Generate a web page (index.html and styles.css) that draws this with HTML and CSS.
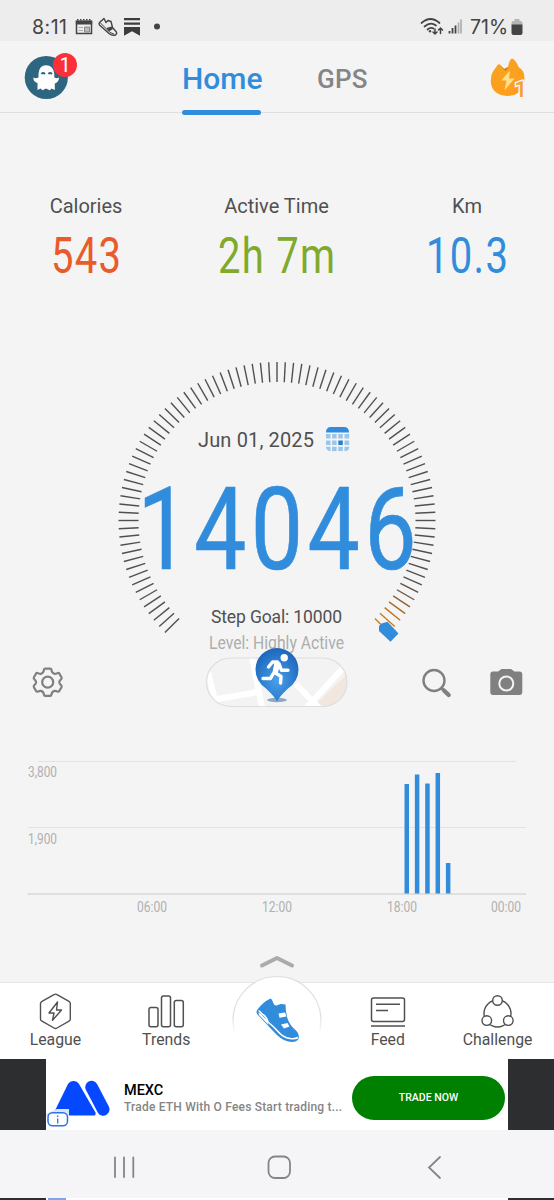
FILE: index.html
```html
<!DOCTYPE html>
<html lang="en">
<head>
<meta charset="UTF-8">
<meta name="viewport" content="width=device-width, initial-scale=1.0">
<title>Step Counter</title>
<link rel="stylesheet" href="styles.css">
</head>
<body>
<div class="status-bar">
    <span class="clock">8:11</span>
    <svg class="status-icons" width="90" height="24" viewBox="74 15 90 24">
        <path d="M76.500 21.500h15v12h-15z" fill="none" stroke="#444" stroke-width="1.500"/>
        <path d="M75.800 20.500h16.400v4h-16.400z" fill="#444"/>
        <path d="M77 19.700h14.500" stroke="#444" stroke-width="1.500" stroke-dasharray="1.500 1.500"/>
        <path d="M78.500 27.500h4.500M78.500 30.500h4.500" stroke="#aaa" stroke-width="1"/>
        <path d="M84.500 27h5v5h-5z" fill="#bbb" stroke="#777" stroke-width=".8"/>
        <path d="M104 18.500L99.500 22.500Q98.500 23.500 99.500 25L109 33.500Q112 36 115.500 35Q117.500 33.500 116 31.500L112.500 27.500L111 21.500L108 20.500L106 22.500Z" fill="none" stroke="#444" stroke-width="1.400" stroke-linejoin="round"/>
        <path d="M100 22.500L110 32.500L114 34" stroke="#444" stroke-width="1" fill="none"/>
        <path d="M106.500 28L111.500 26.500L113 29L109 31.500Z" fill="#444"/>
        <path d="M124 18h16v2.200h-16zM124 22.500h16v2.200h-16zM124 27h16v8.800l-8-4.500l-8 4.500z" fill="#3c3c3c"/>
        <circle cx="157" cy="26.500" r="3" fill="#444"/>
    </svg>
    <svg class="signal" width="43" height="24" viewBox="419 15 43 24">
        <g fill="none" stroke="#444" stroke-width="1.700" stroke-linecap="round">
            <path d="M421.500 23Q430.500 15 439.500 23M424.500 26.500Q430.500 21.500 436 25.500M427.500 29.500Q430.500 27 433.500 28.500"/>
            <path d="M435 29v5M433 32l2 2l2-2M440.500 33.500v-5.500M438.500 30l2-2l2 2" stroke-width="1.500"/>
        </g>
        <circle cx="430" cy="31.300" r="1.200" fill="#444"/>
        <path d="M449.500 33.500v-2.500M452.500 33.500v-5.500M455.500 33.500v-8" stroke="#444" stroke-width="1.800"/>
        <path d="M458.500 33.500v-11M461 33.500v-14" stroke="#aaa" stroke-width="1.600"/>
    </svg>
    <span class="percent">71%</span>
    <svg class="battery" width="12" height="18" viewBox="0 0 12 18">
        <path d="M3.500 1h5v2h1q2 0 2 2v2h-11v-2q0-2 2-2h1z" fill="#b5b5b5"/>
        <path d="M.5 6.500h11v8.500q0 2-2 2h-7q-2 0-2-2z" fill="#444"/>
    </svg>
</div>

<div class="header">
    <div class="avatar">
        <svg width="44" height="44" viewBox="24 55 44 44">
            <circle cx="46.300" cy="77.500" r="21.600" fill="#2e6681"/>
            <path d="M37.500 90V83Q33.500 82 33.300 77.500Q35.500 78.800 38.500 77.500V74Q39 65.300 46 65.300Q53.500 65.300 54.300 74V77.500Q57.500 79 59.200 77.200Q58.500 82.500 54.800 83.500V90L51.500 88.500L49.800 90.200L46 88.500L42.500 90.200L40.500 88.500Z" fill="#fff"/>
            <path d="M41.500 74q1.500-2 3.500 0M48.500 74q1.500-2 3.500 0" stroke="#2e6681" stroke-width="2" fill="none"/>
        </svg>
        <span class="badge">1</span>
    </div>
    <div class="tab active">Home</div>
    <div class="tab gps">GPS</div>
    <svg class="streak" width="38" height="42" viewBox="489 57 38 42">
        <defs>
            <linearGradient id="flame" x1="0" y1="0" x2="0" y2="1">
                <stop offset="0" stop-color="#f7a21e"/>
                <stop offset="1" stop-color="#ff9f1c"/>
            </linearGradient>
        </defs>
        <path d="M499 64Q501 65 504 69L508 67Q509 60 512 58.500Q516 60 518.500 67Q524.500 70 524.500 79Q523 96 507 96Q492 95 490.800 82Q490.500 73 496 67.500Q497 64.500 499 64Z" fill="url(#flame)"/>
        <path d="M500 65.500L504.500 69L509 66.500L505.500 71Z" fill="#cf7820"/>
        <path d="M510 70.500L501 80.500H506.500L504.500 90.500L514.500 78.500H509Z" fill="#ffe08a"/>
        <text x="514.500" y="97" class="streak-count">1</text>
    </svg>
</div>

<div class="stats">
    <div class="stat calories">
        <div class="label">Calories</div>
        <div class="value">543</div>
    </div>
    <div class="stat time">
        <div class="label">Active Time</div>
        <div class="value">2h 7m</div>
    </div>
    <div class="stat distance">
        <div class="label">Km</div>
        <div class="value">10.3</div>
    </div>
</div>

<svg class="gauge" width="554" height="315" viewBox="0 340 554 315">
    <g id="ticks"></g>
    <path d="M379 626L381.500 623.500L387.500 621.800L398.500 633.500L390.500 641.800L379 631Z" fill="#318ddc"/>
    <text x="198" y="447" class="date" textLength="116">Jun 01, 2025</text>
    <g>
        <path d="M326 432.500Q326 427 331 427H344Q349 427 349 432.500Z" fill="#318ddc"/>
        <clipPath id="calClip"><rect x="326" y="427" width="23.500" height="24.500" rx="5"/></clipPath>
        <path clip-path="url(#calClip)" d="M326 434h4.500v4.500h-4.500zM332.100 434h4.500v4.500h-4.500zM338.300 434h4.500v4.500h-4.500zM344.500 434h4.800v4.500h-4.800zM326 440.500h4.500v4.500h-4.500zM332.100 440.500h4.500v4.500h-4.500zM344.500 440.500h4.800v4.500h-4.800zM326 446.800h4.500v4.500h-4.500zM332.100 446.800h4.500v4.500h-4.500zM338.300 446.800h4.500v4.500h-4.500zM344.500 446.800h4.800v4.500h-4.800z" fill="#9cc5ea"/>
        <path d="M338.300 440.500h4.500v4.500h-4.500z" fill="#2b7fc9"/>
    </g>
    <text transform="translate(137.300 569.300) scale(.81 1)" class="steps">14046</text>
    <text x="211" y="622.500" class="goal" textLength="131">Step Goal: 10000</text>
    <text x="209" y="648.500" class="level" textLength="135" lengthAdjust="spacingAndGlyphs">Level: Highly Active</text>
</svg>

<div class="actions">
    <svg class="gear" width="30" height="30" viewBox="33 667 30 30" fill="none" stroke="#808080" stroke-width="2.200" stroke-linejoin="round">
        <path d="M45.200 668.700H50.200Q51.300 668.700 51.500 670Q51.800 673 54.300 673.800Q55.500 674 57.300 673.200Q58.700 672.600 59.400 673.700L61.500 677.300Q62.100 678.500 61 679.400Q59.300 680.700 59.300 682.300Q59.300 683.900 61 685.200Q62.100 686.100 61.500 687.300L59.400 690.900Q58.700 692 57.300 691.400Q55.500 690.600 54.300 690.900Q51.800 691.800 51.500 694.500Q51.300 695.800 50.200 695.800H45.200Q44.100 695.800 43.900 694.500Q43.600 691.800 41.100 690.900Q39.900 690.600 38.100 691.400Q36.700 692 36 690.900L33.900 687.300Q33.300 686.100 34.400 685.200Q36.100 683.900 36.100 682.300Q36.100 680.700 34.400 679.400Q33.300 678.500 33.900 677.300L36 673.700Q36.700 672.600 38.100 673.200Q39.900 674 41.100 673.800Q43.600 673 43.900 670Q44.100 668.700 45.200 668.700Z"/>
        <circle cx="47.700" cy="682.200" r="5.500"/>
    </svg>
    <svg class="map" width="142" height="62" viewBox="206 647 142 62">
        <defs>
            <radialGradient id="pin" cx=".5" cy=".6" r=".6">
                <stop offset="0" stop-color="#4aa0ea"/>
                <stop offset="1" stop-color="#1d67bd"/>
            </radialGradient>
            <clipPath id="mapClip"><rect x="206.500" y="658" width="140.500" height="48.500" rx="24.200"/></clipPath>
        </defs>
        <g clip-path="url(#mapClip)">
            <rect x="206" y="657" width="142" height="50" fill="#f3f3f3"/>
            <path d="M347 674L318 702L323 707H348Z" fill="#f1e7df"/>
            <path d="M206 701L258 692M208 672L216 705M252 657L262 707M296 684L319 708M345 666L307 707" stroke="#fff" stroke-width="6" fill="none"/>
        </g>
        <rect x="206.500" y="658" width="140.500" height="48.500" rx="24.200" fill="none" stroke="#dedede" stroke-width="1.200"/>
        <ellipse cx="277" cy="700" rx="10" ry="2.200" fill="#8ca8c8"/>
        <path d="M277 701.500Q275 697 266 688.500Q255.500 681 255.500 669.500A21.500 21.500 0 0 1 298.500 669.500Q298.500 681 288 688.500Q279 697 277 701.500Z" fill="url(#pin)"/>
        <circle cx="284.200" cy="657.800" r="3.700" fill="#fff"/>
        <path d="M268.500 667L272.500 662H277.500L279.500 664.500M279 664L281.500 670.300H288M275.500 673L281 676.500L280.500 683M273 674L270.500 678.500H263" fill="none" stroke="#fff" stroke-width="3.400" stroke-linejoin="round" stroke-linecap="round"/>
        <path d="M274.500 661.500L280.500 663.500L277.500 674L272 675Z" fill="#fff"/>
    </svg>
    <svg class="search" width="30" height="30" viewBox="421 668 30 30" fill="none" stroke="#808080">
        <circle cx="434" cy="680.500" r="10.500" stroke-width="2.400"/>
        <path d="M441.500 688.200L444 690.500" stroke-width="3"/>
        <path d="M444 690.500L448.700 695" stroke-width="4.300" stroke-linecap="round"/>
    </svg>
    <svg class="camera" width="34" height="30" viewBox="489 667 34 30">
        <path d="M493 671.500H498L501.500 669H511L514.500 671.500H519.500Q522.300 671.500 522.300 674.500V692Q522.300 695 519.500 695H493Q490.300 695 490.300 692V674.500Q490.300 671.500 493 671.500Z" fill="#808080"/>
        <circle cx="506.300" cy="683.500" r="7" fill="none" stroke="#f4f4f4" stroke-width="2"/>
    </svg>
</div>

<svg class="chart" width="554" height="265" viewBox="0 718 554 265">
    <path d="M38 761.500H516M28 827.500H526" stroke="#e3e3e3" stroke-width="1.200"/>
    <path d="M27.500 894H526" stroke="#d9d9d9" stroke-width="1.600"/>
    <g id="bars"></g>
    <g class="axis">
        <text x="28" y="777" textLength="29" lengthAdjust="spacingAndGlyphs">3,800</text>
        <text x="28" y="843.500" textLength="29" lengthAdjust="spacingAndGlyphs">1,900</text>
        <text x="137" y="911.500" textLength="30" lengthAdjust="spacingAndGlyphs">06:00</text>
        <text x="262" y="911.500" textLength="30" lengthAdjust="spacingAndGlyphs">12:00</text>
        <text x="387" y="911.500" textLength="30" lengthAdjust="spacingAndGlyphs">18:00</text>
        <text x="491" y="911.500" textLength="30" lengthAdjust="spacingAndGlyphs">00:00</text>
    </g>
    <path d="M262 965.500L277 958L292 965.500" fill="none" stroke="#ababab" stroke-width="4" stroke-linecap="round" stroke-linejoin="round"/>
</svg>

<div class="nav">
    <div class="nav-item">
        <svg width="40" height="40" viewBox="35 991 40 40" fill="none" stroke="#505050" stroke-width="1.400" stroke-linejoin="round">
            <path d="M54 994.600Q55.500 993.600 57 994.600L69 1001.300Q70.300 1002 70.300 1003.500V1019Q70.300 1020.500 69 1021.200L57 1028Q55.500 1029 54 1028L42 1021.200Q40.500 1020.500 40.500 1019V1003.500Q40.500 1002 42 1001.300Z"/>
            <path d="M57.500 1002L49 1013H54L52.500 1020.300L61.500 1010H56.500Z"/>
        </svg>
        <span>League</span>
    </div>
    <div class="nav-item">
        <svg width="40" height="40" viewBox="146 991 40 40" fill="none" stroke="#505050" stroke-width="1.500">
            <rect x="149" y="1007.500" width="9" height="19.300" rx="2"/>
            <rect x="161.500" y="996" width="9" height="30.800" rx="2"/>
            <rect x="174.300" y="1000.500" width="9" height="26.300" rx="2"/>
        </svg>
        <span>Trends</span>
    </div>
    <div class="nav-item home">
        <svg width="92" height="84" viewBox="231 975 92 84">
            <defs>
                <linearGradient id="ring" x1="0" y1="976" x2="0" y2="1034" gradientUnits="userSpaceOnUse">
                    <stop offset=".7" stop-color="#dedede"/>
                    <stop offset="1" stop-color="#fff"/>
                </linearGradient>
            </defs>
            <circle cx="277" cy="1020.500" r="44" fill="#fff" stroke="url(#ring)" stroke-width="1.200"/>
            <path d="M270.500 998.500Q272 999 273.500 1003.500Q274.500 1006 276.500 1005.500L280.500 1004Q284 1004 285.500 1004.500Q285.500 1012 287.500 1018.500Q289.500 1025 296 1030.500Q300 1034 298.500 1039Q296 1043 288 1041.500Q281 1040 273.500 1031.500L257.500 1014.500Q255.500 1012 257.500 1009.500Q263 1002 270.500 998.500Z" fill="#318ddc"/>
            <path d="M258.500 1011Q259.500 1010.500 262 1014Q266 1015.500 268 1022Q273 1026 278 1031.500Q283 1037.500 290 1038.500Q295 1039.300 298 1037.500" fill="none" stroke="#fff" stroke-width="1.600"/>
            <path d="M258.500 1012L267 1020L268.500 1025L259 1015Z" fill="#fff"/>
            <path d="M278.500 1013.500L285 1012.500L286.500 1016.500L279.500 1017.800ZM281 1024.500L287.500 1023L289.500 1026.500L284 1028.500Z" fill="#fff"/>
        </svg>
    </div>
    <div class="nav-item">
        <svg width="40" height="40" viewBox="368 991 40 40" fill="none" stroke="#505050" stroke-width="1.500">
            <rect x="371.500" y="998" width="33" height="23.500" rx="2"/>
            <path d="M371 1026H405M376 1004.300H400M376 1010.500H388"/>
        </svg>
        <span>Feed</span>
    </div>
    <div class="nav-item">
        <svg width="40" height="40" viewBox="479 991 40 40" fill="#fff" stroke="#505050" stroke-width="1.400">
            <circle cx="498.500" cy="1013.500" r="13.500"/>
            <circle cx="498.500" cy="1000.500" r="4.800"/>
            <circle cx="487.800" cy="1020.600" r="4.800"/>
            <circle cx="509.300" cy="1020.600" r="4.800"/>
        </svg>
        <span>Challenge</span>
    </div>
</div>

<div class="ad">
    <div class="ad-body">
        <svg width="66" height="72" viewBox="46 1059 66 72">
            <path d="M68 1084Q70 1081 73.500 1081Q77 1081 79 1084L95.500 1112.500Q96 1115.500 94 1115.500H59Q54.500 1115 55.500 1109.500Z" fill="#0548ff"/>
            <path d="M91.500 1087L103.300 1109.500" stroke="#0548ff" stroke-width="12.500" stroke-linecap="round"/>
            <path d="M46 1114L57 1109H69V1116H46Z" fill="#dce5fb"/>
            <rect x="48" y="1112.800" width="19.500" height="13" rx="4.500" fill="#fff" stroke="#2d72e6" stroke-width="1.500"/>
            <path d="M57.700 1115.500v1.600M57.700 1118.500v5" stroke="#2d72e6" stroke-width="1.300"/>
        </svg>
        <div class="ad-text">
            <div class="ad-title">MEXC</div>
            <div class="ad-desc">Trade ETH With O Fees Start trading t...</div>
        </div>
        <div class="ad-button">TRADE NOW</div>
    </div>
</div>

<div class="system-nav">
    <svg width="554" height="67" viewBox="0 1131 554 67" fill="none" stroke="#858588" stroke-width="1.800" stroke-linecap="round">
        <path d="M115 1157.500V1177M124 1157.500V1177M133.300 1157.500V1177"/>
        <rect x="268.500" y="1156.500" width="21.500" height="21.500" rx="6.500"/>
        <path d="M440 1157L429 1167.500L440 1178"/>
    </svg>
</div>
<div class="ad next"><div class="ad-body"><div class="ad-mark"></div></div></div>

<script>
    const svgNS = 'http://www.w3.org/2000/svg';
    const ticks = document.getElementById('ticks');
    const bars = document.getElementById('bars');

    // Colors of the last ticks, they fade into orange near the goal
    const endColors = ['#5b5148', '#6e563c', '#8b6336', '#a96c29', '#bf741f', '#cc7a1a', '#d07c18'];

    // 270 degrees dial, one tick every 3 degrees
    for (let i = 0; i <= 90; i++) {
        const angle = (135 + i * 3) * Math.PI / 180;
        const line = document.createElementNS(svgNS, 'line');
        line.setAttribute('x1', 277 + 138.5 * Math.cos(angle));
        line.setAttribute('y1', 520.5 + 138.5 * Math.sin(angle));
        line.setAttribute('x2', 277 + (i === 90 ? 147 : 158.5) * Math.cos(angle));
        line.setAttribute('y2', 520.5 + (i === 90 ? 147 : 158.5) * Math.sin(angle));
        line.setAttribute('stroke', i > 83 ? endColors[i - 84] : '#505050');
        line.setAttribute('stroke-width', 1.4);
        ticks.appendChild(line);
    }

    const heights = [109.5, 119, 110, 120.5, 30.5];
    heights.forEach((h, i) => {
        const bar = document.createElementNS(svgNS, 'rect');
        bar.setAttribute('x', 404.5 + i * 10.35);
        bar.setAttribute('y', 893.5 - h);
        bar.setAttribute('width', 4.5);
        bar.setAttribute('height', h);
        bar.setAttribute('fill', '#318ddc');
        bars.appendChild(bar);
    });
</script>
</body>
</html>
```
FILE: styles.css
```css
body {
    margin: 0;
    width: 554px;
    height: 1200px;
    overflow: hidden;
    background-color: #f4f4f4;
    font-family: Roboto, "Liberation Sans", sans-serif;
    color: #505050;
}

svg {
    display: block;
    flex: none;
    overflow: visible;
}

.status-bar {
    display: flex;
    align-items: center;
    height: 41px;
    padding: 12px 31px 0 32px;
    box-sizing: border-box;
    background-color: #ededed;
    font-family: Inter, sans-serif;
    font-size: 19.5px;
    color: #444;
}

.clock {
    width: 42px;
    letter-spacing: 0.5px;
}

.signal {
    margin-left: auto;
}

.percent {
    width: 41px;
    margin-left: 8px;
    letter-spacing: 0;
}

.header {
    display: flex;
    height: 72px;
    box-sizing: border-box;
    border-bottom: 1px solid #dedede;
}

.avatar {
    position: relative;
    width: 182px;
    padding: 14px 0 0 24px;
    box-sizing: border-box;
}

.badge {
    position: absolute;
    left: 53px;
    top: 12px;
    width: 24px;
    height: 24px;
    border-radius: 50%;
    background-color: #fb3038;
    color: white;
    font-size: 20px;
    line-height: 25px;
    text-align: center;
}

.tab {
    width: 79px;
    height: 74px;
    padding-top: 21px;
    box-sizing: border-box;
    font-size: 30px;
    line-height: 34px;
    font-weight: 500;
    color: #858585;
    white-space: nowrap;
}

.tab.active {
    color: #318ddc;
}

.tab.active::after {
    content: "";
    display: block;
    height: 5px;
    margin-top: 14px;
    border-radius: 3px;
    background-color: #318ddc;
}

.tab.gps {
    margin-left: 56px;
    font-size: 26px;
    letter-spacing: 0.2px;
}

.streak {
    margin: 16px 27px 0 auto;
}

.streak-count {
    font-size: 22px;
    font-weight: 500;
    fill: #f5a02b;
    stroke: #f4f4f4;
    stroke-width: 3px;
    paint-order: stroke;
}

.stats {
    display: flex;
    height: 227px;
    padding: 80px 7px 0 6px;
    box-sizing: border-box;
    text-align: center;
}

.stat {
    width: 160px;
}

.stat.time {
    flex: 1;
}

.label {
    font-size: 20px;
    line-height: 26px;
}

.value {
    font-size: 50px;
    line-height: 58px;
    margin-top: 8px;
    letter-spacing: 1.6px;
    text-indent: 1.6px;
    transform: scaleX(0.8);
}

.calories .value {
    color: #e95b2a;
}

.time .value {
    color: #80aa2b;
}

.distance .value {
    color: #318ddc;
}

.gauge text {
    fill: #505050;
}

.date {
    font-size: 20px;
}

.gauge .steps {
    font-size: 115px;
    letter-spacing: 5.4px;
    fill: #318ddc;
    stroke: #318ddc;
    stroke-width: 0.6px;
}

.goal {
    font-size: 17.5px;
}

.gauge .level {
    font-size: 18.5px;
    fill: #adadad;
}

.actions {
    position: relative;
    display: flex;
    align-items: center;
    height: 63px;
    padding: 0 31px 0 33px;
    box-sizing: border-box;
}

.gear {
    margin-bottom: 9px;
}

.map {
    margin: 0 73px 17px 143px;
}

.search {
    margin-bottom: 7px;
}

.camera {
    margin: 0 0 9px auto;
}

.axis text {
    font-size: 14.5px;
    fill: #b0b0b0;
}

.nav {
    display: flex;
    height: 76px;
    background-color: white;
    box-shadow: 0 -1px 0 #e5e5e5;
}

.nav-item {
    display: flex;
    flex-direction: column;
    align-items: center;
    width: 110.8px;
    padding-top: 8px;
    box-sizing: border-box;
    font-size: 15.8px;
    line-height: 17px;
}

.nav-item.home {
    padding-top: 0;
    margin-top: -8px;
}

.nav-item:last-child {
    padding-right: 2px;
}

.ad {
    height: 71px;
    padding: 0 46px;
    background-color: #2d2e30;
}

.ad-body {
    display: flex;
    align-items: center;
    height: 100%;
    background-color: white;
}

.ad-text {
    width: 228px;
    padding: 8px 0 0 12px;
    box-sizing: content-box;
    white-space: nowrap;
}

.ad-title {
    font-size: 14.5px;
    line-height: 16px;
    font-weight: 500;
    color: black;
}

.ad-desc {
    font-size: 12px;
    line-height: 16px;
    font-weight: 500;
    letter-spacing: 0.2px;
    color: #858585;
}

.ad-button {
    width: 153px;
    height: 44px;
    border-radius: 22px;
    background-color: #008000;
    color: white;
    font-size: 10.5px;
    line-height: 43px;
    font-weight: 500;
    text-align: center;
    margin-top: 6px;
}

.system-nav {
    height: 68px;
    border-top: 1px solid #f5f5f7;
    box-sizing: border-box;
    background-color: #f5f5f7;
}

.ad.next {
    height: 2px;
}

.ad-mark {
    width: 18px;
    height: 2px;
    margin-left: 2px;
    background-color: #7fa6ec;
}
```
